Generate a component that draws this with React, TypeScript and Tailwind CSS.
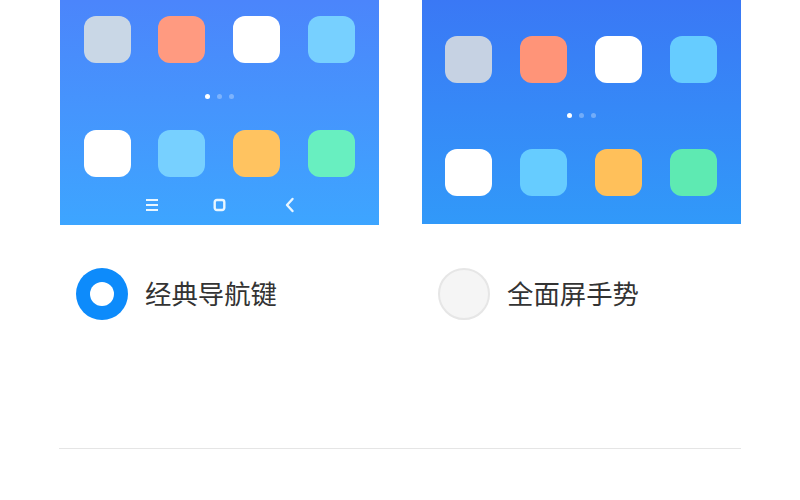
const fontStack = { fontFamily: '"Noto Sans CJK SC", "Noto Sans", sans-serif' }

interface PreviewProps {
  top: string[]
  bottom: string[]
  dotGap: string
  rowGap: string
}

function IconRow({ colors }: { colors: string[] }) {
  return (
    <div className="flex justify-between">
      {colors.map((cls, i) => (
        <div key={i} className={`h-[47px] w-[47px] rounded-[12px] ${cls}`} />
      ))}
    </div>
  )
}

function Dots() {
  return (
    <div className="flex justify-center gap-[7px]">
      <div className="h-[5px] w-[5px] rounded-full bg-white" />
      <div className="h-[5px] w-[5px] rounded-full bg-white/30" />
      <div className="h-[5px] w-[5px] rounded-full bg-white/30" />
    </div>
  )
}

function NavBar() {
  return (
    <div className="mt-[20px] flex items-center pl-[61px]">
      <svg width="14" height="14" viewBox="0 0 14 14" fill="none" stroke="#e8f6ff" strokeWidth="2.2">
        <path d="M1 2h12M1 7h12M1 12h12" />
      </svg>
      <svg className="ml-[54px]" width="13" height="14" viewBox="0 0 13 14" fill="none" stroke="#e8f6ff" strokeWidth="2.4">
        <rect x="1.7" y="2" width="9.6" height="10" rx="2.2" />
      </svg>
      <svg className="ml-[58px]" width="12" height="16" viewBox="0 0 12 16" fill="none" stroke="#e8f6ff" strokeWidth="2.4" strokeLinecap="round" strokeLinejoin="round">
        <path d="M8.5 2 3 8l5.5 6" />
      </svg>
    </div>
  )
}

function Radio({ checked, label }: { checked: boolean; label: string }) {
  return (
    <div className="flex items-center gap-[17px] pl-[16px]">
      {checked ? (
        <div className="flex h-[52px] w-[52px] items-center justify-center rounded-full bg-[#0d8bfb]">
          <div className="h-[24px] w-[24px] rounded-full bg-white" />
        </div>
      ) : (
        <div className="h-[52px] w-[52px] rounded-full border-2 border-[#e6e6e6] bg-[#f5f5f5]" />
      )}
      <span className="pb-[2px] text-[26.4px] leading-[36px] text-[#333333]" style={fontStack}>
        {label}
      </span>
    </div>
  )
}

function Preview({ top, bottom, dotGap, rowGap }: PreviewProps) {
  return (
    <>
      <IconRow colors={top} />
      <div className={dotGap} />
      <Dots />
      <div className={rowGap} />
      <IconRow colors={bottom} />
    </>
  )
}

export default function App() {
  return (
    <div className="h-[500px] w-[800px] overflow-hidden bg-white">
      <div className="flex gap-[43px] pl-[60px]">
        <div className="w-[319px]">
          <div className="h-[225px] bg-gradient-to-b from-[#4b85fb] to-[#3da5ff] pl-[23.5px] pr-[24px] pt-[16px]">
            <Preview
              top={['bg-[#c9d7e6]', 'bg-[#ff9a80]', 'bg-white', 'bg-[#77d0ff]']}
              bottom={['bg-white', 'bg-[#77d0ff]', 'bg-[#ffc360]', 'bg-[#68efc0]']}
              dotGap="h-[31px]"
              rowGap="h-[31px]"
            />
            <NavBar />
          </div>
          <div className="mt-[43px]">
            <Radio checked label="经典导航键" />
          </div>
        </div>
        <div className="w-[319px]">
          <div className="h-[224px] bg-gradient-to-b from-[#3a78f5] to-[#3199f9] pl-[23px] pr-[24px] pt-[36px]">
            <Preview
              top={['bg-[#c6d2e3]', 'bg-[#ff9478]', 'bg-white', 'bg-[#66ccff]']}
              bottom={['bg-white', 'bg-[#66ccff]', 'bg-[#ffc05a]', 'bg-[#5eeab2]']}
              dotGap="h-[30px]"
              rowGap="h-[30.5px]"
            />
          </div>
          <div className="mt-[44px]">
            <Radio checked={false} label="全面屏手势" />
          </div>
        </div>
      </div>
      <div className="mx-[59px] mt-[128px] h-px bg-[#e5e5e5]" />
    </div>
  )
}
